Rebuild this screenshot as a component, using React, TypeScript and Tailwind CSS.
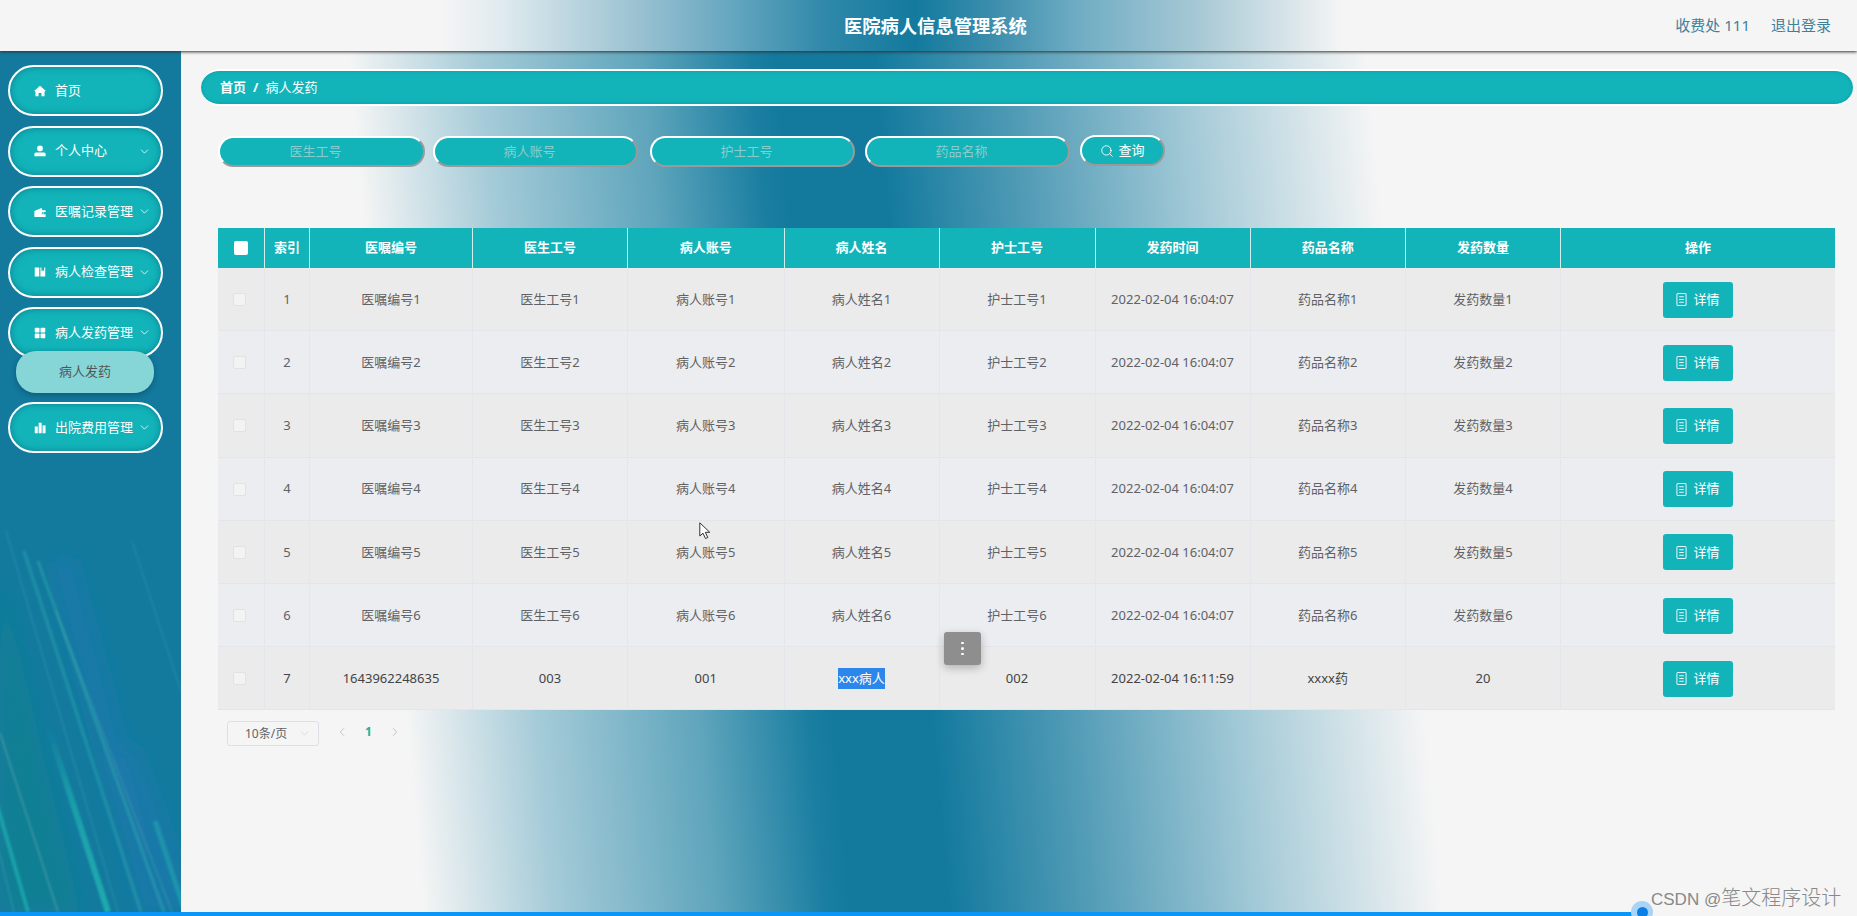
import { ChevronDown, ChevronLeft, ChevronRight, Search } from "lucide-react";

const menu = [
  { label: "首页", icon: "home", arrow: false },
  { label: "个人中心", icon: "user", arrow: true },
  { label: "医嘱记录管理", icon: "wallet", arrow: true },
  { label: "病人检查管理", icon: "book", arrow: true },
  { label: "病人发药管理", icon: "grid", arrow: true },
  { label: "出院费用管理", icon: "bars", arrow: true },
];

const columns = ["索引", "医嘱编号", "医生工号", "病人账号", "病人姓名", "护士工号", "发药时间", "药品名称", "发药数量", "操作"];

const rows = [1, 2, 3, 4, 5, 6].map((n) => [
  String(n),
  `医嘱编号${n}`,
  `医生工号${n}`,
  `病人账号${n}`,
  `病人姓名${n}`,
  `护士工号${n}`,
  "2022-02-04 16:04:07",
  `药品名称${n}`,
  `发药数量${n}`,
]);

const lastRow = ["7", "1643962248635", "003", "001", "xxx病人", "002", "2022-02-04 16:11:59", "xxxx药", "20"];

const gridCols = "grid grid-cols-[47px_45px_163px_155px_156.5px_155px_156px_155px_155.5px_155px_274px]";

function MenuIcon({ name }: { name: string }) {
  return (
    <svg viewBox="0 0 16 16" className="mr-[9px] h-[12px] w-[12px] shrink-0" fill="#ffffff">
      {name === "home" && <path d="M8 1 15.5 7.6 14.5 9 14 8.6V15H10V10.5H6V15H2V8.6L1.500 9 .5 7.600Z" />}
      {name === "user" && (
        <>
          <circle cx="8" cy="4.500" r="3.800" />
          <path d="M2.500 10H13.500Q15.500 10 15.500 12V15H.5V12Q.5 10 2.500 10Z" />
        </>
      )}
      {name === "wallet" && <path d="M.5 6.500 10 2.500 11.500 5.500H15.500V8H10.500V11H15.500V14.500H.5ZM11.500 8.800H13.500V10H11.500Z" />}
      {name === "book" && <path d="M1 2H7V14H1ZM8.500 2H10V7L11.800 5.800 13.500 7V2H15V14H8.500Z" />}
      {name === "grid" && (
        <>
          <rect x="1" y="1" width="6.300" height="6.300" rx="1" />
          <rect x="8.700" y="1" width="6.300" height="6.300" rx="1" />
          <rect x="1" y="8.700" width="6.300" height="6.300" rx="1" />
          <rect x="8.700" y="8.700" width="6.300" height="6.300" rx="1" />
        </>
      )}
      {name === "bars" && (
        <>
          <rect x="1" y="6" width="4" height="9" />
          <rect x="6.200" y="1" width="4" height="14" />
          <rect x="11.400" y="4.500" width="4" height="10.500" />
        </>
      )}
    </svg>
  );
}

function SidebarStreaks() {
  return (
    <svg className="absolute inset-0 h-full w-full" viewBox="0 0 181 861" preserveAspectRatio="none">
      <defs>
        <filter id="soft" x="-50%" y="-10%" width="200%" height="120%">
          <feGaussianBlur stdDeviation="1.2" />
        </filter>
        <filter id="wide" x="-50%" y="-10%" width="200%" height="120%">
          <feGaussianBlur stdDeviation="9" />
        </filter>
        <linearGradient id="fade" x1="0" y1="0" x2="0" y2="1">
          <stop offset="0.5" stopColor="#1fb0b0" stopOpacity="0" />
          <stop offset="0.72" stopColor="#1fb0b0" stopOpacity="0.7" />
          <stop offset="1" stopColor="#1fb0b0" stopOpacity="0.9" />
        </linearGradient>
      </defs>
      <g filter="url(#wide)" fill="none">
        <path d="M0 520 0 861 80 861Z" fill="#0f8093" opacity="0.85" />
        <path d="M62 510 155 861" stroke="#1b79ab" strokeWidth="26" opacity="0.8" />
        <path d="M120 700 181 861" stroke="#1b79ab" strokeWidth="36" opacity="0.7" />
      </g>
      <g filter="url(#soft)" fill="none">
        <path d="M-12 490 108 861" stroke="url(#fade)" strokeWidth="6" />
        <path d="M6 480 118 861" stroke="#3c9cb5" strokeWidth="1.500" opacity="0.4" />
        <path d="M24 500 141 861" stroke="#2eaab0" strokeWidth="3.500" opacity="0.42" />
        <path d="M38 510 164 861" stroke="#36b0ae" strokeWidth="3" opacity="0.45" />
        <path d="M56 560 172 861" stroke="#4aa7b3" strokeWidth="1.500" opacity="0.4" />
        <path d="M0 682 58 861" stroke="#5ba3ab" strokeWidth="1.500" opacity="0.65" />
        <path d="M-4 750 28 861" stroke="#1fb0b0" strokeWidth="4" opacity="0.7" />
        <path d="M-6 780 14 861" stroke="#3c9cb5" strokeWidth="1.500" opacity="0.5" />
        <path d="M132 490 181 640" stroke="#3b96b4" strokeWidth="1.500" opacity="0.35" />
        <path d="M155 770 185 861" stroke="#1fa9b0" strokeWidth="5" opacity="0.55" />
      </g>
    </svg>
  );
}

function DetailButton() {
  return (
    <button className="flex h-[36px] w-[70px] items-center justify-center gap-[6px] rounded-[3px] bg-[#12b4ba] text-[13px] text-white">
      <svg viewBox="0 0 12 14" className="h-[13px] w-[11px]" fill="none" stroke="#ffffff" strokeWidth="1">
        <rect x="1" y="0.500" width="10" height="13" rx="0.500" />
        <path d="M3.500 4H8.500M3.500 7H8.500M3.500 10H8.500" />
      </svg>
      详情
    </button>
  );
}

function Row({ cells, dark, odd }: { cells: string[]; dark?: boolean; odd: boolean }) {
  return (
    <div className={`${gridCols} h-[63.2px] border-b border-[#e3e5ea] pt-[1px] ${odd ? "bg-[#ebebeb]" : "bg-[#ebedf1]"} ${dark ? "text-[#444444]" : "text-[#606266]"}`}>
      <div className="flex items-center justify-center border-r border-[#e5e6eb] pr-[4px]">
        <span className="h-[13px] w-[13px] rounded-[2px] border border-[#e2e2e2] bg-[#f3f3f3]" />
      </div>
      {cells.map((c, i) => (
        <div key={i} className="flex items-center justify-center border-r border-[#e5e6eb]">
          {c === "xxx病人" ? <span className="flex h-[21px] items-center bg-[#2b87ea] text-white">{c}</span> : c}
        </div>
      ))}
      <div className="flex items-center justify-center">
        <DetailButton />
      </div>
    </div>
  );
}

export default function App() {
  return (
    <div className="relative flex h-[916px] w-[1857px] flex-col overflow-hidden bg-[#f5f5f5] font-['Noto_Sans','Noto_Sans_CJK_SC',sans-serif] text-[13px]">
      {/* Top bar */}
      <header className="relative z-10 flex h-[51px] shrink-0 items-center bg-[linear-gradient(90deg,#f5f5f5_440px,#e0ebef_500px,#9cc3d2_634px,#6aa9c2_723px,#2f88a9_826px,#137a9e_915px,#3b8dac_991px,#70adc4_1080px,#a8c9d5_1200px,#f5f5f5_1342px)] shadow-[0_1px_3px_#333333]">
        <h1 className="absolute left-[844px] w-[184px] whitespace-nowrap text-[18.3px] font-bold text-white">医院病人信息管理系统</h1>
        <div className="ml-auto flex gap-[21px] pr-[26px] text-[15px] text-[#3f809b]">
          <span>收费处 111</span>
          <span>退出登录</span>
        </div>
      </header>

      <div className="flex h-[861px] shrink-0">
        {/* Sidebar */}
        <aside className="relative w-[181px] shrink-0 bg-[#137a9e]">
          <SidebarStreaks />
          <nav className="relative flex flex-col gap-[9.500px] pl-[8px] pt-[14px]">
            {menu.map((m) => (
              <div key={m.label} className="contents">
                <div className="relative flex h-[51px] w-[155px] items-center rounded-full border-2 border-white bg-[#12b4b9] pl-[24px] pr-[10px] text-[13px] text-white shadow-[inset_0_0_7px_#0e7f93]">
                  <MenuIcon name={m.icon} />
                  <span className="whitespace-nowrap">{m.label}</span>
                  {m.arrow && <ChevronDown size={13} strokeWidth={1.5} className="ml-auto shrink-0" />}
                </div>
                {m.icon === "grid" && (
                  <div className="relative z-10 -mt-[17px] ml-[8px] flex h-[42px] w-[138px] items-center justify-center rounded-[20px] bg-[#86d6d7] text-[#555555] shadow-[0_2px_6px_rgba(0,50,70,0.45)]">
                    病人发药
                  </div>
                )}
              </div>
            ))}
          </nav>
        </aside>

        {/* Main */}
        <main className="flex-1 bg-[linear-gradient(85deg,#f5f5f5_241px,#a5cbd8_372px,#5fa5bc_534px,#1a7ea1_643px,#137a9e_666px,#137a9e_766px,#4f9ab5_898px,#a4cad7_1075px,#f5f5f5_1257px)] pt-[18px]">
          <div className="ml-[20px] mr-[4px] flex h-[37px] items-center gap-[7px] rounded-full border-y-2 border-white bg-[#12b4ba] pl-[19px] text-[13px] text-white shadow-[inset_0_0_4px_#0f9aa3]">
            <span className="font-bold">首页</span>
            <span className="font-bold">/</span>
            <span>病人发药</span>
          </div>

          <div className="ml-[37px] mt-[30px] flex h-[31px] items-center gap-[10px]">
            <input placeholder="医生工号" className="-mr-[2px] h-[31px] w-[207px] rounded-full border-2 border-b-[#9a9a9a] border-l-white border-r-[#9a9a9a] border-t-white bg-[#12b4ba] pb-[2px] pr-[12px] text-center text-[13px] outline-none placeholder:text-[#8ccbcb]" />
            <input placeholder="病人账号" className="mr-[2px] h-[31px] w-[205px] rounded-full border-2 border-b-[#9a9a9a] border-l-white border-r-[#9a9a9a] border-t-white bg-[#12b4ba] pb-[2px] pr-[12px] text-center text-[13px] outline-none placeholder:text-[#8ccbcb]" />
            <input placeholder="护士工号" className="h-[31px] w-[205px] rounded-full border-2 border-b-[#9a9a9a] border-l-white border-r-[#9a9a9a] border-t-white bg-[#12b4ba] pb-[2px] pr-[12px] text-center text-[13px] outline-none placeholder:text-[#8ccbcb]" />
            <input placeholder="药品名称" className="h-[31px] w-[205px] rounded-full border-2 border-b-[#9a9a9a] border-l-white border-r-[#9a9a9a] border-t-white bg-[#12b4ba] pb-[2px] pr-[12px] text-center text-[13px] outline-none placeholder:text-[#8ccbcb]" />
            <button className="-mt-[2px] flex h-[31px] w-[85px] items-center justify-center gap-[4px] rounded-full border-2 border-b-[#9a9a9a] border-l-white border-r-[#9a9a9a] border-t-white bg-[#12b4ba] text-[13px] text-white">
              <Search size={14} strokeWidth={1.5} />
              查询
            </button>
          </div>

          {/* Table */}
          <div className="ml-[37px] mt-[61px] w-[1617px]">
            <div className={`${gridCols} h-[40px] bg-[#12b4ba] font-bold text-white`}>
              <div className="flex items-center justify-center border-r border-[#cfeeee]">
                <span className="h-[14px] w-[14px] rounded-[2px] bg-white" />
              </div>
              {columns.map((c, i) => (
                <div key={c} className={`flex items-center justify-center ${i < columns.length - 1 ? "border-r border-[#cfeeee]" : ""}`}>
                  {c}
                </div>
              ))}
            </div>
            {rows.map((r, i) => (
              <Row key={r[0]} cells={r} odd={i % 2 === 0} />
            ))}
            <Row cells={lastRow} odd dark />
          </div>

          {/* Pagination */}
          <div className="ml-[46px] mt-[11px] flex items-start">
            <div className="flex h-[25px] w-[92px] items-center justify-between rounded-[3px] border border-[#dcdfe6] bg-[#f5f5f5] pl-[17px] pr-[7px] text-[12px] text-[#606266]">
              10条/页
              <ChevronDown size={13} strokeWidth={1} className="text-[#c0c4cc]" />
            </div>
            <div className="ml-[16px] flex h-[21px] items-center text-[#b8bcc4]">
              <ChevronLeft size={14} strokeWidth={1.5} />
              <span className="mx-[16px] pt-[1px] text-[12px] font-bold text-[#1ab394]">1</span>
              <ChevronRight size={14} strokeWidth={1.5} />
            </div>
          </div>
        </main>
      </div>

      {/* Video progress bar */}
      <div className="relative z-10 h-[4px] w-[1640px] shrink-0 bg-[#0a96f8]" />
      <span className="absolute left-[1631px] top-[901px] z-10 flex h-[22px] w-[22px] items-center justify-center rounded-full bg-[#a8d5f7]">
        <span className="h-[11px] w-[11px] rounded-full bg-[#0a7fe6]" />
      </span>

      {/* Floating handle */}
      <div className="absolute left-[944px] top-[632px] flex h-[33px] w-[37px] flex-col items-center justify-center gap-[3px] rounded-[3px] bg-[#8e8e8e] shadow-[0_3px_8px_rgba(0,0,0,0.25)]">
        <span className="h-[2.500px] w-[2.500px] rounded-full bg-white" />
        <span className="h-[2.500px] w-[2.500px] rounded-full bg-white" />
        <span className="h-[2.500px] w-[2.500px] rounded-full bg-white" />
      </div>

      {/* Mouse pointer */}
      <svg viewBox="0 0 12 18" className="absolute left-[699px] top-[522px] h-[18px] w-[12px]" fill="#ffffff" stroke="#333333" strokeWidth="1">
        <path d="M.8.8V14L4 11.200 6.500 16.500 8.800 15.500 6.300 10.300H10.800Z" />
      </svg>

      {/* Watermark */}
      <div className="absolute left-[1651px] top-[883px] z-20 whitespace-nowrap font-['Liberation_Sans','Noto_Sans_CJK_SC',sans-serif] text-[17px] text-[#888888]">
        CSDN @<span className="text-[20px] font-light">笔文程序设计</span>
      </div>
    </div>
  );
}
